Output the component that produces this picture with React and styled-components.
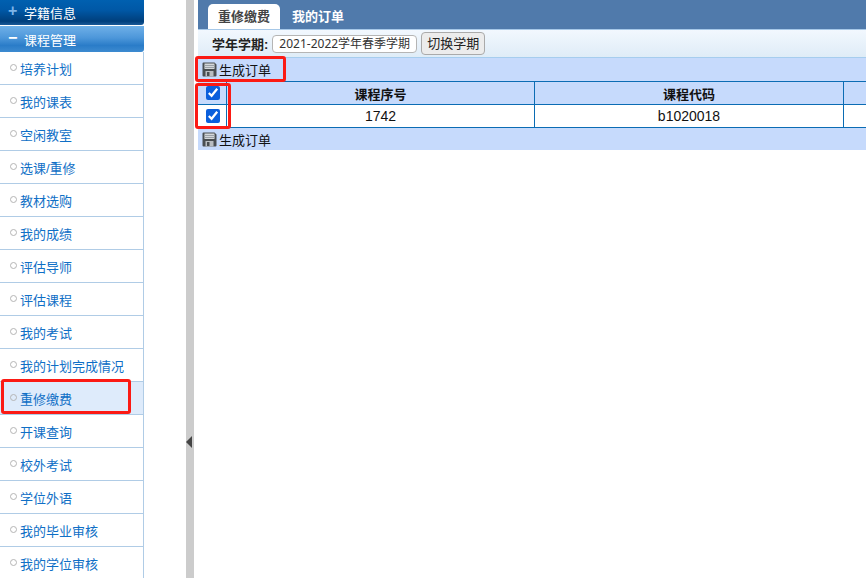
import React from 'react';
import styled, { createGlobalStyle } from 'styled-components';

const cjk = '"Liberation Sans", "Noto Sans CJK SC", sans-serif';

const GlobalStyle = createGlobalStyle`
  html, body {
    margin: 0;
    padding: 0;
    height: 100%;
    overflow: hidden;
    background: #fff;
    font-family: ${cjk};
  }
`;

const Page = styled.div`
  position: relative;
  display: flex;
  width: 866px;
  height: 578px;
  overflow: hidden;
`;

const Sidebar = styled.div`
  width: 144px;
  flex: none;
`;

const GroupHeader = styled.div`
  display: flex;
  align-items: center;
  height: ${(p) => (p.$open ? 26 : 25)}px;
  margin-bottom: ${(p) => (p.$open ? 0 : 1)}px;
  padding-left: 8px;
  gap: 8px;
  border-radius: 0 0 3px 0;
  color: #fff;
  font-size: 13px;
  background: ${(p) =>
    p.$open
      ? 'linear-gradient(#6fb0e8, #4d97da 45%, #2a7cc8 75%, #3d8bd0)'
      : 'linear-gradient(#0060b0, #0058a6 40%, #003f7c 85%, #1b5a98)'};
`;

const Sign = styled.span`
  width: 8px;
  font-size: 16px;
  line-height: 13px;
  font-weight: bold;
  text-align: center;
  margin-bottom: 4px;
  color: ${(p) => (p.$open ? '#fff' : '#7db4e8')};
`;

const MenuList = styled.div`
  border-right: 1px solid #b0cce6;
`;

const MenuItem = styled.div`
  display: flex;
  align-items: center;
  gap: 3px;
  height: 32px;
  padding-left: 10px;
  border-bottom: 1px solid #b0cce6;
  font-size: 13px;
  color: #0f6fc6;
  background: ${(p) => (p.$active ? '#deebfb' : '#fff')};
`;

const Bullet = styled.span`
  width: 5px;
  height: 5px;
  border: 1px solid #b5b5b5;
  border-radius: 50%;
  flex: none;
  margin-bottom: 2px;
`;

const Gutter = styled.div`
  width: 42px;
  flex: none;
`;

const Splitter = styled.div`
  width: 8px;
  flex: none;
  box-sizing: border-box;
  padding-top: 436px;
  background: #cccccc;
`;

const Arrow = styled.div`
  width: 0;
  height: 0;
  border-top: 6px solid transparent;
  border-bottom: 6px solid transparent;
  border-right: 6px solid #444;
`;

const Main = styled.div`
  flex: 1;
  min-width: 0;
  padding-left: 4px;
`;

const TabBar = styled.div`
  display: flex;
  align-items: flex-end;
  height: 29px;
  padding-left: 10px;
  background: #507aab;
  border-bottom: 1px solid #a6c8e8;
`;

const Tab = styled.div`
  width: ${(p) => (p.$active ? 72 : 76)}px;
  height: 25px;
  line-height: 25px;
  text-align: center;
  font-size: 13px;
  font-weight: bold;
  border-radius: 5px 5px 0 0;
  color: ${(p) => (p.$active ? '#444' : '#fff')};
  background: ${(p) => (p.$active ? '#fff' : 'transparent')};
`;

const TermBar = styled.div`
  display: flex;
  align-items: center;
  height: 28px;
  box-sizing: border-box;
  padding-left: 14px;
  background: linear-gradient(#f2f8fe, #dfecf7);
  border-bottom: 1px solid #a6cdee;
  font-size: 13px;
  color: #222;
`;

const TermLabel = styled.b`
  margin-right: 4px;
`;

const TermValue = styled.div`
  height: 16px;
  line-height: 15px;
  padding: 0 6px;
  margin-right: 4px;
  background: #fff;
  border: 1px solid #b5b5b5;
  border-radius: 4px;
  font-family: "Noto Sans", "Noto Sans CJK SC", sans-serif;
  font-size: 12px;
  color: #333;
`;

const SwitchButton = styled.div`
  height: 21px;
  line-height: 21px;
  padding: 0 5px;
  background: #ececec;
  border: 1px solid #aaa;
  border-radius: 4px;
  font-size: 13px;
  color: #222;
`;

const ActionBar = styled.div`
  display: flex;
  align-items: center;
  gap: 2px;
  height: ${(p) => (p.$bottom ? 22 : 23)}px;
  padding-left: 4px;
  background: #c6dafc;
  font-size: 13px;
  color: #111;
`;

const Grid = styled.div`
  display: grid;
  grid-template-columns: 29px 308px 309px 1fr;
  border-top: 1px solid #0b6cb4;
`;

const Cell = styled.div`
  display: flex;
  align-items: center;
  justify-content: center;
  height: 22px;
  border-bottom: 1px solid #0b6cb4;
  border-right: ${(p) => (p.$last ? 'none' : '1px solid #0b6cb4')};
  background: ${(p) => (p.$head ? '#c6dafc' : '#fff')};
  font-size: ${(p) => (p.$head ? 13 : 14)}px;
  font-weight: ${(p) => (p.$head ? 'bold' : 'normal')};
  color: #111;
`;

const Check = styled.input.attrs({ type: 'checkbox', defaultChecked: true })`
  width: 14px;
  height: 14px;
  margin: 0 0 0 1px;
  accent-color: #0a5fdc;
`;

const Highlight = styled.div`
  position: absolute;
  left: ${(p) => p.$x}px;
  top: ${(p) => p.$y}px;
  width: ${(p) => p.$w}px;
  height: ${(p) => p.$h}px;
  box-sizing: border-box;
  border: 3px solid #fb1a14;
  border-radius: 3px;
  pointer-events: none;
`;

const SaveIcon = () => (
  <svg width="15" height="15" viewBox="0 0 15 15">
    <path d="M0.5 1.5 A1 1 0 0 1 1.5 .5 H12.5 L14.5 2.5 V13.5 A1 1 0 0 1 13.5 14.5 H1.5 A1 1 0 0 1 .5 13.5 Z" fill="#4a4e52" />
    <rect x="2.5" y="1.5" width="10" height="5.5" fill="#d4d7da" />
    <rect x="2.5" y="3" width="10" height="1" fill="#9aa0a6" />
    <rect x="2.5" y="5" width="10" height="1" fill="#9aa0a6" />
    <rect x="3.5" y="9" width="8" height="5.5" fill="#b9bdc1" />
    <rect x="5" y="10" width="2.5" height="4" fill="#4a4e52" />
  </svg>
);

const menu = [
  '培养计划', '我的课表', '空闲教室', '选课/重修', '教材选购', '我的成绩',
  '评估导师', '评估课程', '我的考试', '我的计划完成情况', '重修缴费', '开课查询',
  '校外考试', '学位外语', '我的毕业审核', '我的学位审核',
];

export default function App() {
  return (
    <Page>
      <GlobalStyle />
      <Sidebar>
        <GroupHeader>
          <Sign>+</Sign>学籍信息
        </GroupHeader>
        <GroupHeader $open>
          <Sign $open>−</Sign>课程管理
        </GroupHeader>
        <MenuList>
          {menu.map((name) => (
            <MenuItem key={name} $active={name === '重修缴费'}>
              <Bullet />
              {name}
            </MenuItem>
          ))}
        </MenuList>
      </Sidebar>
      <Gutter />
      <Splitter>
        <Arrow />
      </Splitter>
      <Main>
        <TabBar>
          <Tab $active>重修缴费</Tab>
          <Tab>我的订单</Tab>
        </TabBar>
        <TermBar>
          <TermLabel>学年学期:</TermLabel>
          <TermValue>2021-2022学年春季学期</TermValue>
          <SwitchButton>切换学期</SwitchButton>
        </TermBar>
        <ActionBar>
          <SaveIcon />生成订单
        </ActionBar>
        <Grid>
          <Cell $head><Check /></Cell>
          <Cell $head>课程序号</Cell>
          <Cell $head>课程代码</Cell>
          <Cell $head $last />
          <Cell><Check /></Cell>
          <Cell>1742</Cell>
          <Cell>b1020018</Cell>
          <Cell $last />
        </Grid>
        <ActionBar $bottom>
          <SaveIcon />生成订单
        </ActionBar>
      </Main>
      <Highlight $x={195} $y={56} $w={91} $h={26} />
      <Highlight $x={195} $y={83} $w={36} $h={46} />
      <Highlight $x={1} $y={379} $w={130} $h={35} />
    </Page>
  );
}
